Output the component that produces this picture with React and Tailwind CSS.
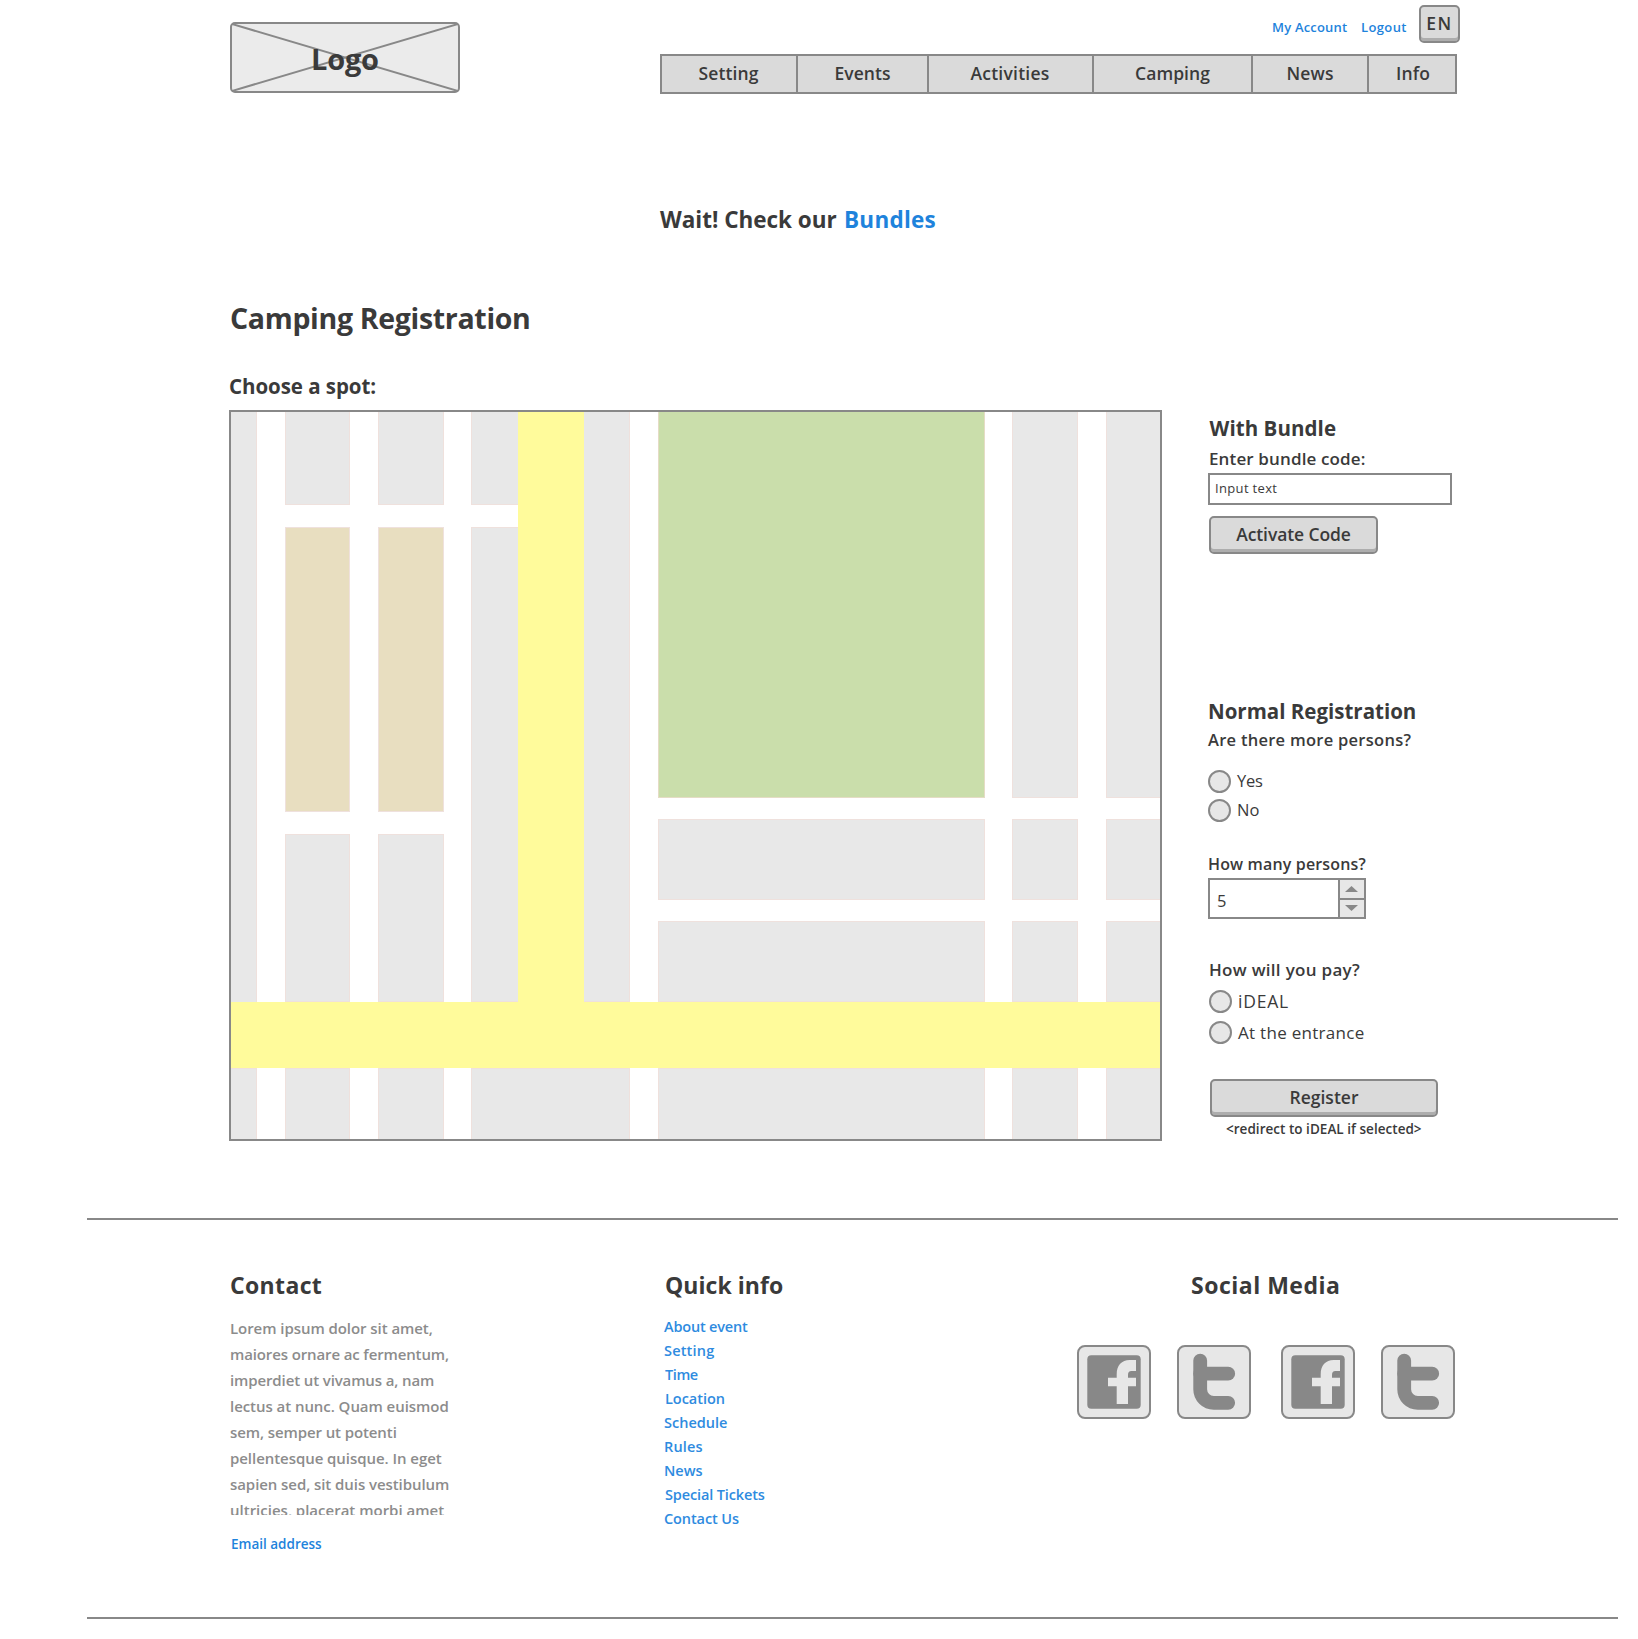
import React from 'react';

const NAV = [
  ['Setting', 'w-[136px] border-r-2 pr-px tracking-[0.1px]'],
  ['Events', 'w-[131px] border-r-2 tracking-[0.08px]'],
  ['Activities', 'w-[165px] border-r-2 pr-px tracking-[0.25px]'],
  ['Camping', 'w-[159px] border-r-2 tracking-[0.06px]'],
  ['News', 'w-[116px] border-r-2 tracking-[0.15px]'],
  ['Info', 'w-[86px] pl-[2px] tracking-[0.1px]'],
];

const CONTACT = [
  ['Lorem ipsum dolor sit amet,', 'tracking-[-0.06px]'],
  ['maiores ornare ac fermentum,', 'tracking-[-0.125px]'],
  ['imperdiet ut vivamus a, nam', 'tracking-[-0.12px]'],
  ['lectus at nunc. Quam euismod', 'tracking-[-0.055px]'],
  ['sem, semper ut potenti', 'tracking-[-0.1px]'],
  ['pellentesque quisque. In eget', 'tracking-[-0.055px]'],
  ['sapien sed, sit duis vestibulum', 'tracking-[-0.07px]'],
  ['ultricies, placerat morbi amet', 'tracking-[0px]'],
];

const LINKS = [
  ['About event', 'tracking-[-0.18px]'],
  ['Setting', 'tracking-[0.18px]'],
  ['Time', 'pl-px tracking-[-0.4px]'],
  ['Location', 'pl-px tracking-[-0.04px]'],
  ['Schedule', 'tracking-[0px]'],
  ['Rules', 'tracking-[0.15px]'],
  ['News', 'tracking-[0px]'],
  ['Special Tickets', 'pl-px tracking-[-0.13px]'],
  ['Contact Us', 'tracking-[-0.1px]'],
];

function Button({ className, children }) {
  return (
    <button
      className={`flex h-[38px] items-center justify-center rounded-[5px] border-2 border-[#888] bg-[#dadada] pb-[2px] font-semibold shadow-[inset_0_-3px_0_#adadad] ${className}`}
    >
      {children}
    </button>
  );
}

function Radio({ className, textClass, label }) {
  return (
    <label className={`flex h-[23px] items-center ${className}`}>
      <span className="size-[23px] rounded-full border-2 border-[#888] bg-[#e7e7e7]" />
      <span className={textClass}>{label}</span>
    </label>
  );
}

function Block({ className }) {
  return <div className={`border-[#efe1dd] ${className}`} />;
}

function CampMap() {
  return (
    <div className="mt-[10px] flex h-[731px] w-[933px] flex-col border-2 border-[#888] bg-white">
      <div className="flex h-[590px]">
        <Block className="w-[26px] border-r bg-[#e8e8e8]" />
        <div className="ml-7 flex w-[65px] flex-col gap-[22px]">
          <Block className="h-[93px] border border-t-0 bg-[#e8e8e8]" />
          <Block className="h-[285px] border bg-[#e8dec0]" />
          <Block className="h-[168px] border bg-[#e8e8e8]" />
        </div>
        <div className="ml-7 flex w-[66px] flex-col gap-[22px]">
          <Block className="h-[93px] border border-t-0 bg-[#e8e8e8]" />
          <Block className="h-[285px] border bg-[#e8dec0]" />
          <Block className="h-[168px] border bg-[#e8e8e8]" />
        </div>
        <div className="ml-[27px] flex w-[47px] flex-col gap-[22px]">
          <Block className="h-[93px] border-b border-l bg-[#e8e8e8]" />
          <Block className="h-[475px] border-y border-l bg-[#e8e8e8]" />
        </div>
        <div className="w-[66px] bg-[#fffb9b]" />
        <Block className="w-[46px] border-r border-b bg-[#e8e8e8]" />
        <div className="ml-7 flex w-[327px] flex-col gap-[21px]">
          <Block className="h-[386px] border border-t-0 border-[#e5dcc5]! bg-[#cadeab]" />
          <Block className="h-[81px] border bg-[#e8e8e8]" />
          <Block className="h-[81px] border bg-[#e8e8e8]" />
        </div>
        <div className="ml-[27px] flex w-[66px] flex-col gap-[21px]">
          <Block className="h-[386px] border border-t-0 bg-[#e8e8e8]" />
          <Block className="h-[81px] border bg-[#e8e8e8]" />
          <Block className="h-[81px] border bg-[#e8e8e8]" />
        </div>
        <div className="ml-7 flex w-[54px] flex-col gap-[21px]">
          <Block className="h-[386px] border-b border-l bg-[#e8e8e8]" />
          <Block className="h-[81px] border-y border-l bg-[#e8e8e8]" />
          <Block className="h-[81px] border-y border-l bg-[#e8e8e8]" />
        </div>
      </div>
      <div className="h-[66px] bg-[#fffb9b]" />
      <div className="flex h-[71px]">
        <Block className="w-[26px] border-t border-r bg-[#e8e8e8]" />
        <Block className="ml-7 w-[65px] border border-b-0 bg-[#e8e8e8]" />
        <Block className="ml-7 w-[66px] border border-b-0 bg-[#e8e8e8]" />
        <Block className="ml-[27px] w-[159px] border border-b-0 bg-[#e8e8e8]" />
        <Block className="ml-7 w-[327px] border border-b-0 bg-[#e8e8e8]" />
        <Block className="ml-[27px] w-[66px] border border-b-0 bg-[#e8e8e8]" />
        <Block className="ml-7 w-[54px] border-t border-l bg-[#e8e8e8]" />
      </div>
    </div>
  );
}

function Facebook() {
  return (
    <svg viewBox="0 0 70 70" className="size-full">
      <rect x="8.3" y="8.3" width="53.4" height="53.4" rx="4" fill="#888" />
      <path
        d="M37.7 57V39.3H29V30.7h8.7V27c0-8.5 5-14 13-14H57v11h-4.500c-2.500 0-3.500 1.500-3.500 4v2.700h8v8.600h-8V57z"
        fill="#e7e7e7"
      />
    </svg>
  );
}

function Twitter() {
  return (
    <svg viewBox="0 0 70 70" className="size-full" fill="none" stroke="#888" strokeWidth="13.8" strokeLinecap="round">
      <path d="M21.2 13.600V42.300A13.500 13.500 0 0 0 34.700 55.800H49.200" />
      <path d="M21.2 26.700H49.200" />
    </svg>
  );
}

function Social({ className, children }) {
  return <a className={`block size-[74px] rounded-lg border-2 border-[#888] bg-[#e7e7e7] ${className}`}>{children}</a>;
}

export default function App() {
  return (
    <div className="h-[1639px] w-[1638px] overflow-hidden bg-white font-['Open_Sans',sans-serif] whitespace-nowrap text-[#3a3a3a]">
      <header className="flex h-[94px] pl-[230px]">
        <div className="relative mt-[22px] h-[71px] w-[230px] rounded-[5px] border-2 border-[#888] bg-[#ebebeb]">
          <svg viewBox="0 0 226 67" className="absolute inset-0 size-full" stroke="#888" strokeWidth="2">
            <path d="M0 0L226 67M226 0L0 67" />
          </svg>
          <span className="relative block pt-[15px] pl-[79px] text-[29px] leading-[40px] font-bold tracking-[-0.200px]">
            Logo
          </span>
        </div>
        <div className="ml-[200px] w-[800px]">
          <div className="flex h-[54px] pl-[612px] text-[13px] leading-5 font-semibold text-[#1e83dc]">
            <a className="mt-[17px] w-[89px] tracking-[0.19px]">My Account</a>
            <a className="mt-[17px] w-[58px] tracking-[0.38px]">Logout</a>
            <Button className="mt-[5px] w-[41px] text-[17.500px] tracking-[1.500px] text-[#3a3a3a]">EN</Button>
          </div>
          <nav className="flex h-10 w-[797px] border-2 border-[#888] bg-[#dadada] text-[17.500px] font-semibold">
            {NAV.map(([label, cls]) => (
              <a key={label} className={`flex items-center justify-center border-[#888] pb-[2px] ${cls}`}>
                {label}
              </a>
            ))}
          </nav>
        </div>
      </header>

      <div className="mt-[110px] flex pl-[660px] text-[22.500px] leading-8 font-bold">
        <span className="w-[184px] tracking-[-0.02px]">Wait! Check our</span>
        <a className="tracking-[0.25px] text-[#1e83dc]">Bundles</a>
      </div>

      <h1 className="mt-[62px] ml-[230px] text-[28.500px] leading-10 font-bold tracking-[-0.32px]">Camping Registration</h1>

      <main className="mt-[34px] flex pl-[229px]">
        <div>
          <h2 className="text-[20.500px] leading-7 font-bold tracking-[-0.05px]">Choose a spot:</h2>
          <CampMap />
        </div>
        <aside className="mt-[42px] ml-[46px] w-[244px]">
          <h2 className="pl-[1.500px] text-[20.500px] leading-7 font-bold tracking-[0.07px]">With Bundle</h2>
          <p className="mt-[5px] pl-px text-[17px] leading-6 font-semibold tracking-[0.13px]">Enter bundle code:</p>
          <div className="mt-[2px] flex h-8 items-center border-2 border-[#888] pl-[5px] text-[13px] tracking-[0.34px]">
            <span className="-mt-px">Input text</span>
          </div>
          <Button className="mt-[11px] ml-px w-[169px] text-[17.500px] tracking-[-0.1px]">Activate Code</Button>

          <h2 className="mt-[143px] text-[20.500px] leading-7 font-bold">Normal Registration</h2>
          <p className="mt-[3px] text-[16.500px] leading-6 font-semibold tracking-[0.27px]">Are there more persons?</p>
          <Radio className="mt-[17.500px]" textClass="pl-[6px] text-[16.500px] tracking-[-0.3px]" label="Yes" />
          <Radio className="mt-[6px]" textClass="pl-[6px] text-[16.500px]" label="No" />

          <p className="mt-[31.500px] text-[16px] leading-[22px] font-semibold tracking-[0.15px]">How many persons?</p>
          <div className="mt-[3px] flex h-[41px] w-[158px] border-2 border-[#888]">
            <span className="w-[128px] pt-[9px] pl-[7px] text-[16.500px] leading-6">5</span>
            <div className="w-[26px] border-l-2 border-[#888] bg-[#e7e7e7]">
              <div className="flex h-5 items-center justify-center border-b-2 border-[#888] pr-px">
                <svg viewBox="0 0 13 6" className="h-[6px] w-[13px]" fill="#888">
                  <path d="M0 6L6.500 0L13 6z" />
                </svg>
              </div>
              <div className="flex h-[16px] items-center justify-center pr-px">
                <svg viewBox="0 0 13 6" className="h-[6px] w-[13px]" fill="#888">
                  <path d="M0 0H13L6.500 6z" />
                </svg>
              </div>
            </div>
          </div>

          <p className="mt-[39px] pl-px text-[17px] leading-6 font-semibold tracking-[0.300px]">How will you pay?</p>
          <Radio className="mt-2 ml-px" textClass="pl-[6px] text-[17.500px] tracking-[0.800px]" label="iDEAL" />
          <Radio className="mt-2 ml-px" textClass="pl-[6px] text-[17px] tracking-[0.29px]" label="At the entrance" />

          <Button className="mt-[35px] ml-[2px] w-[228px] text-[17.500px] tracking-[0px]">Register</Button>
          <p className="mt-[2px] pl-[18px] text-[13.500px] leading-5 font-semibold tracking-[0.03px]">
            &lt;redirect to iDEAL if selected&gt;
          </p>
        </aside>
      </main>

      <footer className="mt-[77px] ml-[87px] flex h-[401px] w-[1531px] border-y-2 border-[#888] pl-[143px]">
        <section className="mt-[49px] w-[434px]">
          <h2 className="text-[23px] leading-8 font-bold tracking-[0.35px]">Contact</h2>
          <div className="mt-[14px] h-[200px] overflow-hidden text-[15px] leading-[26px] font-semibold text-[#8c8c8c]">
            {CONTACT.map(([line, cls]) => (
              <p key={line} className={cls}>
                {line}
              </p>
            ))}
          </div>
          <a className="mt-[19px] block pl-px text-[13.500px] leading-5 font-semibold text-[#1e83dc]">Email address</a>
        </section>
        <section className="mt-[49px] w-[413px]">
          <h2 className="pl-px text-[23px] leading-8 font-bold tracking-[0.05px]">Quick info</h2>
          <ul className="mt-[14px] text-[14.500px] leading-6 font-semibold text-[#2e8be0]">
            {LINKS.map(([label, cls]) => (
              <li key={label} className={cls}>
                {label}
              </li>
            ))}
          </ul>
        </section>
        <section className="mt-[49px]">
          <h2 className="pl-[114px] text-[23px] leading-8 font-bold tracking-[0.5px]">Social Media</h2>
          <div className="mt-[44px] flex">
            <Social><Facebook /></Social>
            <Social className="ml-[26px]"><Twitter /></Social>
            <Social className="ml-[30px]"><Facebook /></Social>
            <Social className="ml-[26px]"><Twitter /></Social>
          </div>
        </section>
      </footer>
    </div>
  );
}
